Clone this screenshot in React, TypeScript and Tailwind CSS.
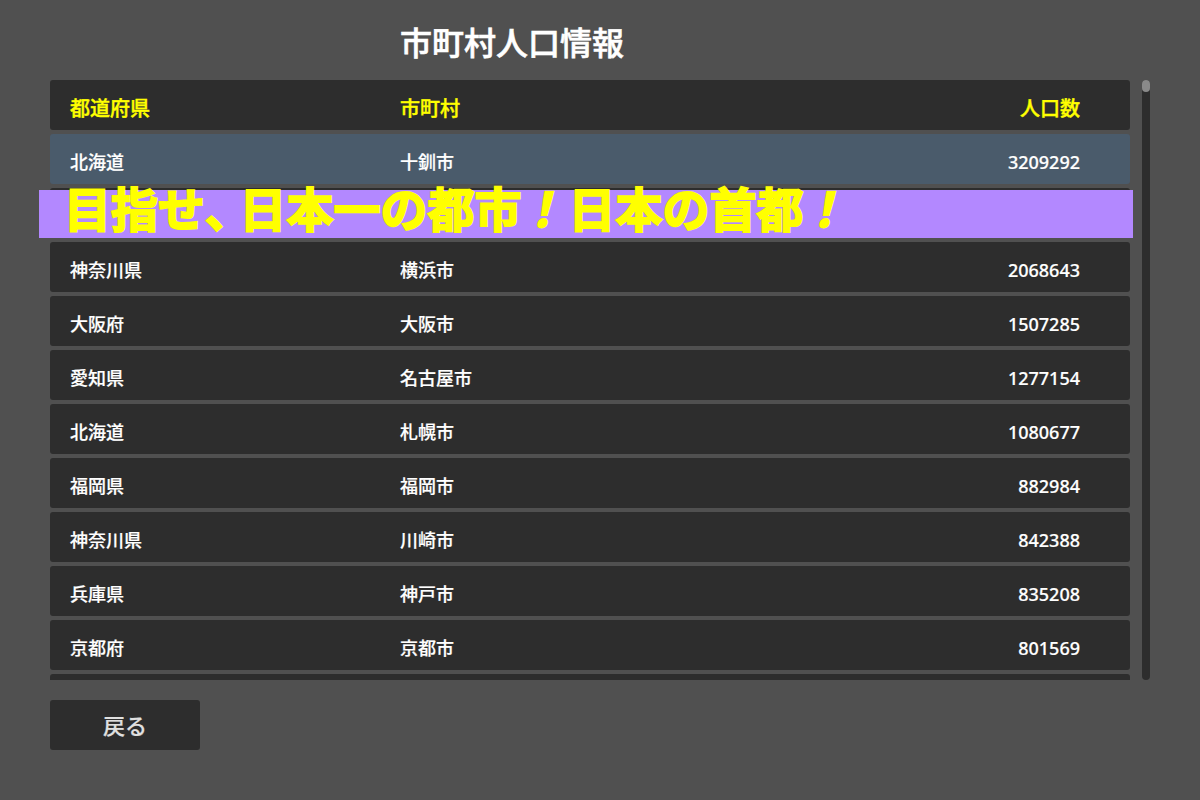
const rows: [string, string, string, boolean?][] = [
  ["北海道", "十釧市", "3209292", true],
  ["", "", ""],
  ["神奈川県", "横浜市", "2068643"],
  ["大阪府", "大阪市", "1507285"],
  ["愛知県", "名古屋市", "1277154"],
  ["北海道", "札幌市", "1080677"],
  ["福岡県", "福岡市", "882984"],
  ["神奈川県", "川崎市", "842388"],
  ["兵庫県", "神戸市", "835208"],
  ["京都府", "京都市", "801569"],
  ["", "", ""],
];

export default function App() {
  return (
    <div className="relative h-[800px] w-[1200px] overflow-hidden bg-[#505050] font-['Noto_Sans','Noto_Sans_CJK_JP',sans-serif] text-white">
      <div className="flex h-[80px] items-start pl-[400px] pt-[19px]">
        <h1 className="text-[32px] leading-[48px] font-medium [-webkit-text-stroke:0.6px_#ffffff]">市町村人口情報</h1>
      </div>
      <div className="flex h-[600px] pl-[50px]">
        <div className="flex h-full w-[1080px] flex-col gap-1 overflow-hidden">
          <div className="flex h-[50px] shrink-0 items-center rounded-[3px] bg-[#2d2d2d] pt-[7px] pr-[50px] pl-5 text-[20px] font-medium text-[#ffff00] [-webkit-text-stroke:0.4px_#ffff00]">
            <span className="w-[330px] shrink-0">都道府県</span>
            <span className="flex-1">市町村</span>
            <span>人口数</span>
          </div>
          {rows.map((r, i) => (
            <div
              key={i}
              className={
                r[3]
                  ? "flex h-[50px] shrink-0 items-center rounded-[3px] bg-[#4a5b6b] pt-[7px] pr-[50px] pl-5 text-[18px] font-medium [-webkit-text-stroke:0.2px_#ffffff]"
                  : "flex h-[50px] shrink-0 items-center rounded-[3px] bg-[#2d2d2d] pt-[7px] pr-[50px] pl-5 text-[18px] font-medium [-webkit-text-stroke:0.2px_#ffffff]"
              }
            >
              <span className="w-[330px] shrink-0">{r[0]}</span>
              <span className="flex-1">{r[1]}</span>
              <span>{r[2]}</span>
            </div>
          ))}
        </div>
        <div className="ml-3 h-full w-2 rounded-full bg-[#2d2d2d]">
          <div className="h-3 w-2 rounded-full bg-[#8a8a8a]" />
        </div>
      </div>
      <div className="pt-5 pl-[50px]">
        <button className="flex h-[50px] w-[150px] items-center justify-center rounded-[3px] bg-[#2d2d2d] text-[22px] font-medium text-[#e0e0e0] [-webkit-text-stroke:0.2px_#e0e0e0]">
          戻る
        </button>
      </div>
      <div className="absolute top-[190px] left-[39px] flex h-[48px] w-[1094px] items-center bg-[#b388ff] pb-[10px] pl-[25px]">
        <span className="text-[47px] leading-[44px] font-bold whitespace-nowrap text-[#ffff00] [-webkit-text-stroke:2px_#ffff00]">
          目指せ<span className="mr-[11px] [font-feature-settings:'palt']">、</span>日本一の都市<span className="inline-block -skew-x-12">！</span>日本の首都<span className="inline-block -skew-x-12">！</span>
        </span>
      </div>
    </div>
  );
}
